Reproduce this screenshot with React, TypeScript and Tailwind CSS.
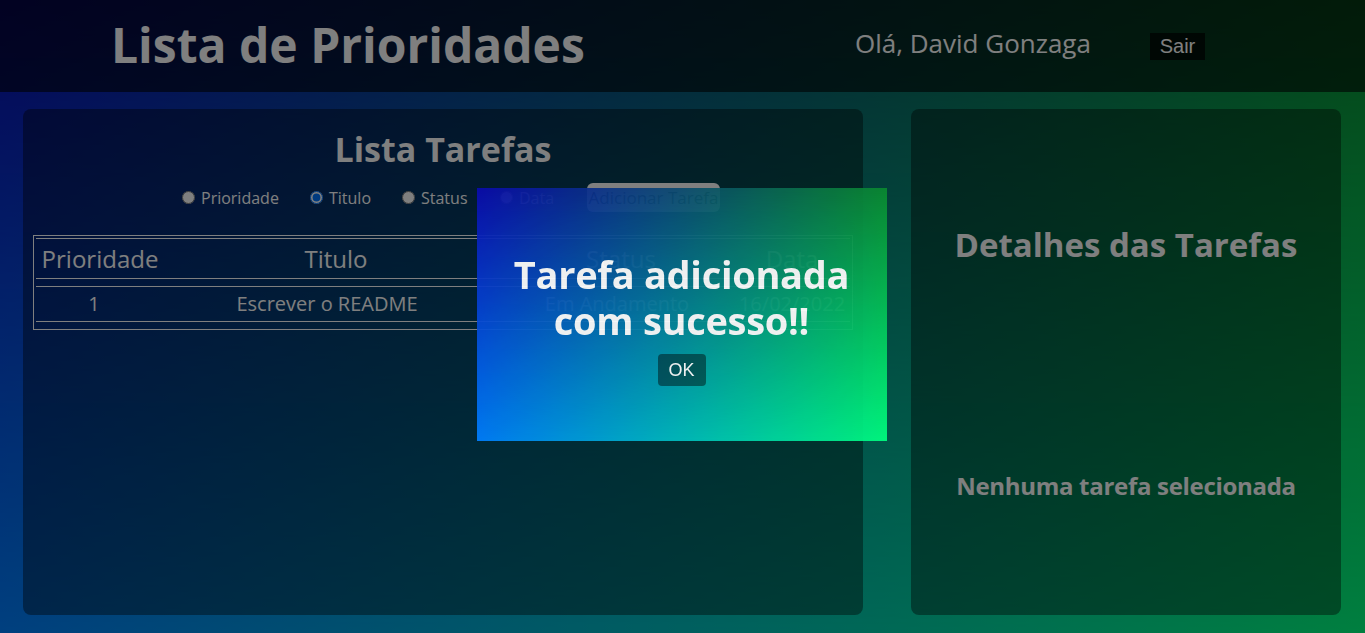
import React from "react";

function Bilinear() {
  return (
    <div className="absolute inset-0 bg-[linear-gradient(to_right,#0b0bad,#0b8a30)]">
      <div className="absolute inset-0 bg-[linear-gradient(to_right,#0080ff,#00ff80)] [mask-image:linear-gradient(to_bottom,transparent,black)]" />
    </div>
  );
}

function Radio({ label, checked, w }: { label: string; checked?: boolean; w: string }) {
  return (
    <label className={`flex items-center ${w}`}>
      <input type="radio" name="ordem" defaultChecked={checked} className="m-0 h-[13px] w-[13px]" />
      <span className="ml-[6px] text-[16px] leading-[20px]">{label}</span>
    </label>
  );
}

export default function App() {
  return (
    <div className="relative h-[633px] w-full overflow-hidden font-['Open_Sans',sans-serif] text-white">
      <Bilinear />
      <div className="relative flex h-full flex-col">
        <header className="flex h-[92px] shrink-0 items-center bg-black/60 pl-[111px] pr-[160px]">
          <h1 className="pb-[3px] text-[48px] font-bold leading-none">Lista de Prioridades</h1>
          <div className="ml-auto flex w-[350px] items-center">
            <span className="w-[295px] pb-[6px] text-[26px] leading-[36px]">Olá, David Gonzaga</span>
            <button className="h-[27px] w-[55px] bg-black/70 font-['Liberation_Sans',Arial,sans-serif] text-[20px] leading-[23px] text-white">
              Sair
            </button>
          </div>
        </header>

        <main className="flex flex-1 gap-[48px] pb-[18px] pl-[23px] pr-[24px] pt-[17px]">
          <section className="flex w-[840px] flex-col rounded-lg bg-black/40 px-[10px] pt-[18px]">
            <h2 className="text-center text-[34px] font-bold leading-[44px]">Lista Tarefas</h2>
            <div className="mt-[12px] flex h-[29px] items-center pl-[149px]">
              <Radio label="Prioridade" w="w-[128px]" />
              <Radio label="Titulo" checked w="w-[92px]" />
              <Radio label="Status" w="w-[98px]" />
              <Radio label="Data" w="w-[87px]" />
              <button className="h-[29px] w-[133px] rounded-[6px] bg-white text-[17px] text-[#222]">
                Adicionar Tarefa
              </button>
            </div>
            <div className="mt-[23px] border border-white px-[2px] pb-[7px] pt-[2px]">
              <div className="grid h-[41px] grid-cols-[128px_344px_226px_116px] items-center border-y border-white text-center text-[24px] leading-[30px]">
                <span>Prioridade</span>
                <span>Titulo</span>
                <span>Status</span>
                <span>Data</span>
              </div>
              <div className="mt-[7px] grid h-[36px] grid-cols-[128px_344px_226px_116px] items-center border-y border-white text-center text-[20px] leading-[26px]">
                <span className="pr-[12px]">1</span>
                <span className="pr-[18px]">Escrever o README</span>
                <span className="pr-[8px]">Em Andamento</span>
                <span>16/02/2022</span>
              </div>
            </div>
          </section>

          <section className="flex w-[430px] flex-col items-center rounded-lg bg-black/40 pt-[116px]">
            <h2 className="text-[33px] font-bold leading-[40px]">Detalhes das Tarefas</h2>
            <p className="mt-[206px] text-[24px] font-bold leading-[30px] tracking-[-0.3px]">
              Nenhuma tarefa selecionada
            </p>
          </section>
        </main>
      </div>

      <div className="absolute inset-0 flex items-center justify-center bg-black/50 pb-[4px] pr-[2px]">
        <div className="relative h-[253px] w-[410px] overflow-hidden opacity-[0.93]">
          <Bilinear />
          <div className="relative flex flex-col items-center pt-[63px]">
            <h2 className="text-center text-[38px] font-bold leading-[46px] tracking-[-0.3px] text-white">
              Tarefa adicionada
              <br />
              com sucesso!!
            </h2>
            <button className="mt-[11px] h-[32px] w-[48px] rounded-[4px] bg-black/45 font-['Liberation_Sans',Arial,sans-serif] text-[18px] text-white">
              OK
            </button>
          </div>
        </div>
      </div>
    </div>
  );
}
